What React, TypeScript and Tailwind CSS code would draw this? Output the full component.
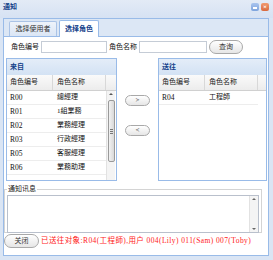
import React from "react";

const fromRows = [
    { id: "R00", name: "總經理" },
    { id: "R01", name: "1組業務" },
    { id: "R02", name: "業務經理" },
    { id: "R03", name: "行政經理" },
    { id: "R05", name: "客服經理" },
    { id: "R06", name: "業務助理" },
];

const toRows = [{ id: "R04", name: "工程師" }];

const PillButton = ({ label, className }: { label: string; className: string }) => (
    <button
        className={`flex items-center justify-center rounded-full border border-[#a9a9a9] bg-gradient-to-b from-white to-[#e6e6e6] text-[7px] text-[#333] ${className}`}
    >
        {label}
    </button>
);

const RolePanel = ({ title, rows, scroll }: { title: string; rows: { id: string; name: string }[]; scroll?: boolean }) => (
    <div className="flex h-[123px] flex-col border border-[#99bbe8] bg-white">
        <div className="flex h-[16px] items-center bg-gradient-to-b from-[#e4edf8] to-[#d3e2f4] pl-[3px] text-[7px] font-bold text-[#15428b]">
            {title}
        </div>
        <div className="flex h-[16px] border-b border-[#d0d0d0] bg-gradient-to-b from-[#fafafa] to-[#ececec] text-[7px] text-[#222]">
            <div className="flex w-[46px] items-center border-r border-[#d8d8d8] pl-[3px]">角色编号</div>
            <div className="flex w-[53px] items-center border-r border-[#d8d8d8] pl-[4px]">角色名称</div>
            <div className="flex-1" />
        </div>
        <div className="flex flex-1 overflow-hidden">
            <div className="w-[99px]">
                {rows.map((r) => (
                    <div key={r.id} className="flex h-[14px] border-b border-[#ededed] text-[7px] text-[#111]">
                        <div className="flex w-[46px] items-center pl-[3px] text-[7.5px]">{r.id}</div>
                        <div className="flex w-[53px] items-center pl-[4px]">{r.name}</div>
                    </div>
                ))}
            </div>
            {scroll && (
                <div className="flex w-[9px] flex-col items-center border-l border-[#e2e2e2] bg-[#f4f4f4]">
                    <div className="mt-[2px] h-0 w-0 border-x-[2px] border-b-[2px] border-x-transparent border-b-[#555]" />
                    <div className="mt-[5px] flex h-[62px] w-[7px] flex-col items-center justify-center gap-[1px] rounded-[2px] border border-[#9a9a9a] bg-gradient-to-r from-[#f2f2f2] to-[#d9d9d9]">
                        <div className="h-px w-[3px] bg-[#777]" />
                        <div className="h-px w-[3px] bg-[#777]" />
                        <div className="h-px w-[3px] bg-[#777]" />
                    </div>
                </div>
            )}
        </div>
    </div>
);

export default function App() {
    return (
        <div
            className="flex h-[260px] w-[273px] flex-col bg-[#dae5f4] text-[7px]"
            style={{ fontFamily: '"Liberation Serif", "Noto Sans CJK SC", serif' }}
        >
            {/* title bar */}
            <div className="flex h-[18px] items-start justify-between bg-gradient-to-b from-[#e3ebf6] to-[#d6e2f3] px-[3px] pt-[2px]">
                <span className="text-[7px] font-bold text-[#15428b]">通知</span>
                <div className="mr-[1px] mt-[1px] flex gap-[2px]">
                    <div className="flex h-[8px] w-[8px] items-center justify-center rounded-[2px] bg-gradient-to-b from-[#a9c4ee] to-[#7ea4dd]">
                        <div className="mt-[2px] h-[2px] w-[4px] bg-white" />
                    </div>
                    <div className="flex h-[8px] w-[8px] items-center justify-center rounded-[2px] bg-gradient-to-b from-[#f09a70] to-[#d9693d] text-[7px] font-bold leading-none text-white">
                        ×
                    </div>
                </div>
            </div>

            {/* tab panel */}
            <div className="ml-[3px] mr-[4px] flex h-[238px] flex-col border border-[#99bbe8] bg-white">
                <div className="flex h-[18px] items-end gap-[2px] border-b border-[#99bbe8] bg-[#dce7f5] pl-[5px]">
                    <div className="flex h-[15px] w-[48px] items-center justify-center rounded-t-[2px] border border-b-0 border-[#aac3e6] bg-gradient-to-b from-[#eef3fa] to-[#dbe6f5] text-[7px] text-[#333]">
                        选择使用者
                    </div>
                    <div className="-mb-px flex h-[17px] w-[40px] items-center justify-center rounded-t-[2px] border border-b-0 border-[#99bbe8] bg-white text-[7px] font-bold text-[#15428b]">
                        选择角色
                    </div>
                </div>

                {/* search row */}
                <div className="flex h-[20px] items-center pl-[7px] text-[7px] text-[#111]">
                    <span className="w-[30px]">角色编号</span>
                    <div className="h-[12px] w-[66px] border border-[#c5ccd6] bg-white" />
                    <span className="ml-[2px] w-[30px]">角色名称</span>
                    <div className="h-[12px] w-[68px] border border-[#c5ccd6] bg-white" />
                    <PillButton label="查询" className="ml-[2px] h-[14px] w-[34px]" />
                </div>

                {/* role panels */}
                <div className="mt-px flex pl-[2px]">
                    <div className="w-[111px]">
                        <RolePanel title="来自" rows={fromRows} scroll />
                    </div>
                    <div className="flex w-[41px] flex-col items-center pt-[37px]">
                        <PillButton label=">" className="h-[11px] w-[25px]" />
                        <PillButton label="<" className="mt-[19px] h-[11px] w-[25px]" />
                    </div>
                    <div className="w-[109px]">
                        <RolePanel title="送往" rows={toRows} />
                    </div>
                </div>

                {/* message fieldset */}
                <fieldset className="mt-[3px] h-[49px] w-[258px] border border-[#d4d4d4] px-[2px]">
                    <legend className="px-[1px] text-[7px] text-[#222]">通知讯息</legend>
                    <div className="flex h-[38px] border border-[#b9c0cc] bg-white">
                        <div className="flex-1" />
                        <div className="flex w-[9px] flex-col items-center justify-between border-l border-[#e2e2e2] bg-[#f4f4f4] py-[2px]">
                            <div className="h-0 w-0 border-x-[2px] border-b-[2px] border-x-transparent border-b-[#666]" />
                            <div className="h-0 w-0 border-x-[2px] border-t-[2px] border-x-transparent border-t-[#666]" />
                        </div>
                    </div>
                </fieldset>

                {/* footer */}
                <div className="mt-px flex items-center">
                    <PillButton label="关闭" className="h-[14px] w-[35px]" />
                    <span className="ml-[2px] whitespace-nowrap text-[7.5px] tracking-[0.4px] text-[#ff1a1a]">
                        已送往对象:R04(工程師),用户 004(Lily) 011(Sam) 007(Toby)
                    </span>
                </div>
            </div>
        </div>
    );
}
